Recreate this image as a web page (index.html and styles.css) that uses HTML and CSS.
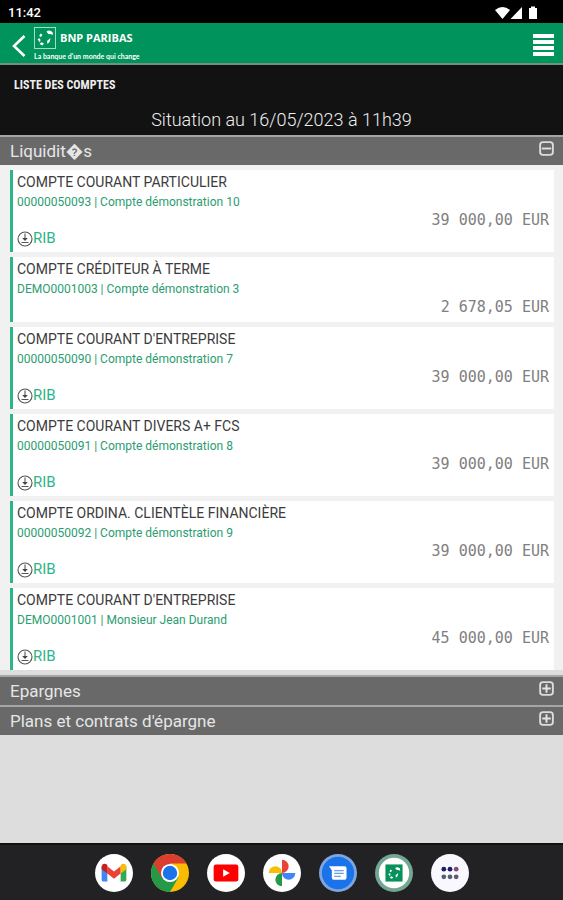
FILE: index.html
```html
<!DOCTYPE html>
<html lang="fr">
<head>
<meta charset="utf-8">
<meta name="viewport" content="width=device-width, initial-scale=1">
<title>Liste des comptes</title>
<link rel="stylesheet" href="styles.css">
</head>
<body>
<svg class="sprite" aria-hidden="true">
  <symbol id="download" viewBox="0 0 16 16">
    <circle cx="8" cy="8" r="7" fill="none" stroke="#555" stroke-width="1.1"/>
    <path d="M8 2.5v6M4.5 11.5h7" fill="none" stroke="#555" stroke-width="1.1"/>
    <path d="M5.2 7h5.6L8 10z" fill="#444"/>
  </symbol>
  <symbol id="plus" viewBox="0 0 16 16">
    <rect x="1.2" y="1.2" width="13.6" height="13.6" rx="3" fill="none" stroke="#dcdcdc" stroke-width="2"/>
    <path d="M8 3.5v9M3.5 8h9" stroke="#e4e4e4" stroke-width="2"/>
  </symbol>
  <symbol id="minus" viewBox="0 0 16 16">
    <rect x="1.2" y="1.2" width="13.6" height="13.6" rx="3" fill="none" stroke="#dcdcdc" stroke-width="2"/>
    <path d="M3 8h10" stroke="#e4e4e4" stroke-width="2"/>
  </symbol>
  <symbol id="birds" viewBox="0 0 22 22">
    <path d="M12.5 4.5c2-1.500 4-1 6 .5l.5 3-2.500-1c-2 .5-3-.5-4-2.500zM6.500 6.500l2 1.200-1.500 2.300-1.800-1zM3.500 12l2.500-.8.5 2.500-1 1.500zM5.500 17l2-1.800 2.500 1.300-1.500 2zM13 14l3.500-3-.8 3.800L13.500 17z" fill="currentColor"/>
  </symbol>
</svg>

<div class="status">
  <span>11:42</span>
  <svg width="44" height="14" viewBox="0 0 44 14" aria-hidden="true">
    <path d="M0 4Q7.500-2 15 4L7.500 13zM27 1v12H15.500zM34 2h2V.5h4V2h2v11h-8z" fill="#fff"/>
  </svg>
</div>

<header class="topbar">
  <button class="back" type="button" aria-label="Retour">
    <svg width="14" height="24" viewBox="0 0 14 24"><path d="M12.500 2L2 12l10.500 10" fill="none" stroke="#fff" stroke-width="2.600"/></svg>
  </button>
  <div class="brand">
    <div class="brand-row">
      <svg class="brand-logo" width="22" height="22"><rect x=".5" y=".5" width="21" height="21" fill="none" stroke="#a5dcc5"/><use href="#birds"/></svg>
      <span class="brand-name">BNP PARIBAS</span>
    </div>
    <div class="tagline">La banque d'un monde qui change</div>
  </div>
  <button class="menu" type="button" aria-label="Menu"><i></i><i></i><i></i><i></i></button>
</header>

<section class="heading">
  <h1>LISTE DES COMPTES</h1>
  <p>Situation au 16/05/2023 à 11h39</p>
</section>

<main>
  <button class="section" type="button" aria-expanded="true"><span>Liquidit�s</span><svg><use href="#minus"/></svg></button>
  <ul class="accounts">
    <li>
      <h2>COMPTE COURANT PARTICULIER</h2>
      <a class="number" href="#">00000050093 | Compte démonstration 10</a>
      <span class="amount">39 000,00 EUR</span>
      <a class="rib" href="#"><svg><use href="#download"/></svg>RIB</a>
    </li>
    <li>
      <h2>COMPTE CRÉDITEUR À TERME</h2>
      <a class="number" href="#">DEMO0001003 | Compte démonstration 3</a>
      <span class="amount">2 678,05 EUR</span>
    </li>
    <li>
      <h2>COMPTE COURANT D'ENTREPRISE</h2>
      <a class="number" href="#">00000050090 | Compte démonstration 7</a>
      <span class="amount">39 000,00 EUR</span>
      <a class="rib" href="#"><svg><use href="#download"/></svg>RIB</a>
    </li>
    <li>
      <h2>COMPTE COURANT DIVERS A+ FCS</h2>
      <a class="number" href="#">00000050091 | Compte démonstration 8</a>
      <span class="amount">39 000,00 EUR</span>
      <a class="rib" href="#"><svg><use href="#download"/></svg>RIB</a>
    </li>
    <li>
      <h2>COMPTE ORDINA. CLIENTÈLE FINANCIÈRE</h2>
      <a class="number" href="#">00000050092 | Compte démonstration 9</a>
      <span class="amount">39 000,00 EUR</span>
      <a class="rib" href="#"><svg><use href="#download"/></svg>RIB</a>
    </li>
    <li>
      <h2>COMPTE COURANT D'ENTREPRISE</h2>
      <a class="number" href="#">DEMO0001001 | Monsieur Jean Durand</a>
      <span class="amount">45 000,00 EUR</span>
      <a class="rib" href="#"><svg><use href="#download"/></svg>RIB</a>
    </li>
  </ul>
  <button class="section" type="button" aria-expanded="false"><span>Epargnes</span><svg><use href="#plus"/></svg></button>
  <button class="section" type="button" aria-expanded="false"><span>Plans et contrats d'épargne</span><svg><use href="#plus"/></svg></button>
</main>

<nav class="dock">
  <a href="#" aria-label="Gmail"><svg viewBox="0 0 40 40">
    <circle cx="20" cy="20" r="20" fill="#fff"/>
    <path d="M7 13v14q0 2 2 2h4V17z" fill="#4285f4"/><path d="M33 13v14q0 2-2 2h-4V17z" fill="#34a853"/>
    <path d="M13 13l7 5.500 7-5.500v7.500L20 26l-7-5.500z" fill="#ea4335"/>
    <path d="M7 14c0-4 3.500-4.500 6-2.500v9L7 16z" fill="#c5221f"/><path d="M33 14c0-4-3.500-4.500-6-2.500v9l6-4.500z" fill="#fbbc04"/>
  </svg></a>
  <a href="#" aria-label="Chrome"><svg viewBox="0 0 40 40">
    <circle cx="20" cy="20" r="20" fill="#fbbc04"/>
    <path d="M2.700 10A20 20 0 0 0 20 40l8.700-15L20 20z" fill="#249a48"/>
    <path d="M2.700 10A20 20 0 0 1 37.300 10H20v10l-8.700 5z" fill="#dc3d31"/>
    <circle cx="20" cy="20" r="9.500" fill="#fff"/><circle cx="20" cy="20" r="7.600" fill="#1a73e8"/>
  </svg></a>
  <a href="#" aria-label="YouTube"><svg viewBox="0 0 40 40">
    <circle cx="20" cy="20" r="20" fill="#fff"/><rect x="7" y="11" width="26" height="18" rx="2.500" fill="#f00"/><path d="M17 16v8l7-4z" fill="#fff"/>
  </svg></a>
  <a href="#" aria-label="Photos"><svg viewBox="0 0 40 40">
    <circle cx="20" cy="20" r="20" fill="#fff"/>
    <path d="M20 6a7 7 0 0 1 0 14z" fill="#ea4335"/><path d="M34 20a7 7 0 0 1-14 0z" fill="#4285f4"/>
    <path d="M20 34a7 7 0 0 1 0-14z" fill="#249a48"/><path d="M6 20a7 7 0 0 1 14 0z" fill="#fbbc04"/>
  </svg></a>
  <a href="#" aria-label="Messages"><svg viewBox="0 0 40 40">
    <circle cx="20" cy="20" r="20" fill="#7fa6de"/><circle cx="20" cy="20" r="17" fill="#1a73e8"/>
    <path d="M10.500 13H27q2 0 2 2v10q0 2-2 2H15.500q-2 0-2-2v-8z" fill="#fff"/><path d="M16 17.500h10M16 20.500h10M16 23.500h7" stroke="#669df6" stroke-width="1.300"/>
  </svg></a>
  <a href="#" aria-label="Mes comptes"><svg viewBox="0 0 40 40">
    <circle cx="20" cy="20" r="20" fill="#72a792"/><circle cx="20" cy="20" r="16" fill="#fff"/>
    <rect x="11" y="11" width="18" height="18" fill="#07925a"/><use href="#birds" x="11" y="11" width="18" height="18" color="#fff"/>
  </svg></a>
  <a href="#" aria-label="Applications"><svg viewBox="0 0 40 40">
    <circle cx="20" cy="20" r="20" fill="#faf8ff"/>
    <g fill="#1c1c70"><circle cx="13.500" cy="16" r="2.500"/><circle cx="20" cy="16" r="2.500"/></g><circle cx="26.500" cy="16" r="2.500" fill="#87506f"/>
    <g fill="#5b5b73"><circle cx="13.500" cy="24" r="2.500"/><circle cx="20" cy="24" r="2.500"/><circle cx="26.500" cy="24" r="2.500"/></g>
  </svg></a>
</nav>
</body>
</html>
```
FILE: styles.css
```css
* { box-sizing: border-box; }

body {
  margin: 0;
  min-height: 100vh;
  display: flex;
  flex-direction: column;
  background: #ddd;
  font-family: Roboto, "Liberation Sans", sans-serif;
}

h1, h2, p, ul { margin: 0; padding: 0; }
button { border: 0; background: none; padding: 0; font: inherit; color: inherit; cursor: pointer; }
a { text-decoration: none; }
.sprite { position: absolute; width: 0; height: 0; }

.status {
  display: flex;
  justify-content: space-between;
  align-items: center;
  height: 23px;
  padding: 2px 24px 0 8px;
  background: #000;
  color: #fff;
  font-size: 13px;
  font-weight: 500;
}

.topbar {
  display: flex;
  align-items: center;
  height: 42px;
  padding: 0 9px 0 12px;
  background: #00935c;
  border-bottom: 2px solid #71917f;
  color: #fff;
}
.back { display: flex; padding-top: 6px; }
.brand { margin-left: 8px; padding-top: 3px; flex: 1; font-weight: 700; }
.brand-row { display: flex; align-items: center; gap: 4px; }
.brand-name { font-family: "Open Sans", sans-serif; font-size: 11px; line-height: 22px; }
.tagline { font-family: Lato, sans-serif; font-size: 7px; line-height: 14px; }
.menu { display: flex; flex-direction: column; gap: 2px; width: 21px; padding-top: 4px; }
.menu i { height: 4px; background: #fff; }

.heading { background: #121212; padding: 8px 14px 2px; color: #eee; }
.heading h1 {
  font-family: "Roboto Condensed", "Liberation Sans Narrow", Roboto, sans-serif;
  font-size: 12px;
  line-height: 24px;
  font-weight: 700;
}
.heading p { padding-top: 9px; font-size: 18px; line-height: 27px; font-weight: 300; text-align: center; }

main { flex: 1; }
.section {
  display: flex;
  justify-content: space-between;
  align-items: center;
  width: 100%;
  height: 30px;
  padding: 0 9px 0 10px;
  background: #696969;
  border-top: 2px solid #a5a5a5;
  color: #e6e6e6;
  font-size: 17px;
  line-height: 28px;
  font-weight: 400;
  text-align: left;
}
.section svg { width: 15px; height: 15px; margin-bottom: 6px; }

.accounts {
  display: grid;
  gap: 5px;
  padding: 5px 9px 0 10px;
  background: #f1f1f1;
  border-bottom: 5px solid #ddd;
  list-style: none;
}
.accounts li {
  display: grid;
  grid-template-rows: 24px 16px 25px;
  background: #fff;
  border-left: 3px solid #2cb588;
  padding: 0 5px 0 4px;
}
.accounts h2 { font-size: 14px; line-height: 25px; font-weight: 400; color: #3c3c3c; }
.number { font-size: 12px; line-height: 16px; color: #2b9d70; }
.amount {
  font-family: "DejaVu Sans Mono", monospace;
  font-size: 15px;
  line-height: 21px;
  color: #808080;
  text-align: right;
}
.rib {
  display: flex;
  align-items: center;
  justify-self: start;
  height: 17px;
  margin-top: -5px;
  margin-bottom: 5px;
  color: #2cb588;
  font-size: 15px;
  line-height: 17px;
}
.rib svg { width: 16px; height: 16px; }

.dock {
  display: flex;
  justify-content: center;
  align-items: center;
  gap: 18px;
  height: 57px;
  background: #222225;
  border-top: 2px solid #111;
}
.dock svg { display: block; width: 38px; height: 38px; }
```
